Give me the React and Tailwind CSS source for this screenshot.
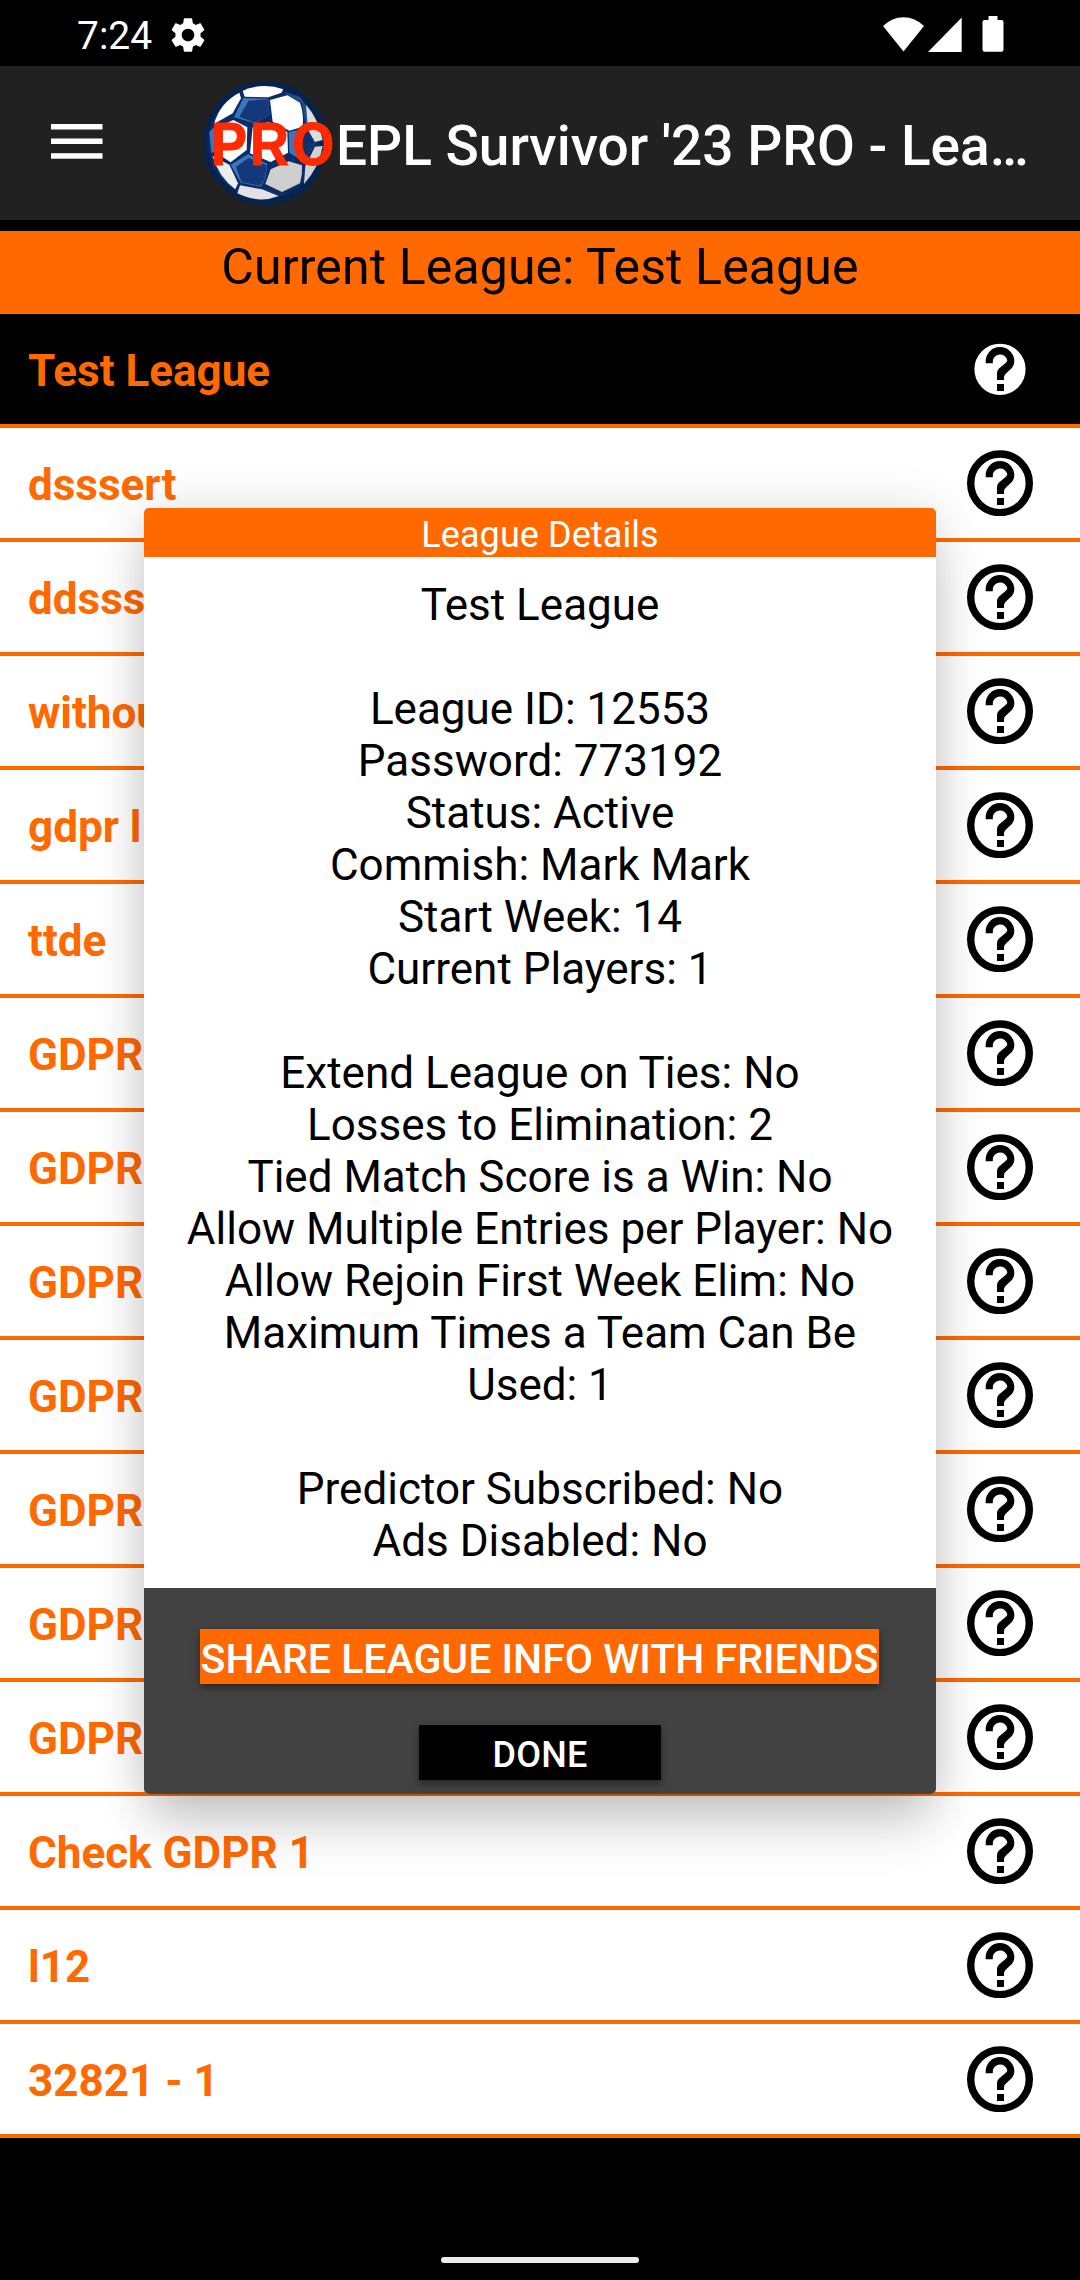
import React from 'react';

const leagues = [
    'Test League',
    'dsssert',
    'ddsssert',
    'without',
    'gdpr l',
    'ttde',
    'GDPR 1',
    'GDPR 2',
    'GDPR 3',
    'GDPR 4',
    'GDPR 5',
    'GDPR 6',
    'GDPR 7',
    'Check GDPR 1',
    'l12',
    '32821 - 1'
];

const details = [
    ['Test League'],
    [
        'League ID: 12553',
        'Password: 773192',
        'Status: Active',
        'Commish: Mark Mark',
        'Start Week: 14',
        'Current Players: 1'
    ],
    [
        'Extend League on Ties: No',
        'Losses to Elimination: 2',
        'Tied Match Score is a Win: No',
        'Allow Multiple Entries per Player: No',
        'Allow Rejoin First Week Elim: No',
        'Maximum Times a Team Can Be Used: 1'
    ],
    ['Predictor Subscribed: No', 'Ads Disabled: No']
];

function App() {
    return (
        <div className="relative w-[1080px] h-[2280px] overflow-hidden bg-black font-['Roboto',sans-serif] flex flex-col">
            <StatusBar />
            <Header />

            <div className="mt-[11px] h-[83px] shrink-0 bg-[#ff6900] text-center text-black text-[50px] tracking-[0.12px] leading-[58px] pt-[7px]">
                Current League: Test League
            </div>

            <div className="flex flex-col">
                {leagues.map((nome, i) => (
                    <LeagueRow key={nome} name={nome} selected={i === 0} />
                ))}
            </div>

            <div className="mt-auto mb-[17px] mx-auto w-[198px] h-[6px] rounded-full bg-[#ececec]" />

            <LeagueDetails />
        </div>
    );
}

function StatusBar() {
    return (
        <div className="h-[66px] shrink-0 flex items-center text-white">
            <span className="ml-[77px] mt-[6px] w-[90px] text-[39px] leading-[46px]">7:24</span>
            <svg className="w-[42px] h-[42px] mt-[4px]" viewBox="0 0 24 24" fill="currentColor">
                <path d="M19.14 12.94c.04-.3.06-.61.06-.94 0-.32-.02-.64-.07-.94l2.03-1.58c.18-.14.23-.41.12-.61l-1.92-3.32c-.12-.22-.37-.29-.59-.22l-2.39.96c-.5-.38-1.03-.7-1.62-.94l-.36-2.54c-.04-.24-.24-.41-.48-.41h-3.84c-.24 0-.43.17-.47.41l-.36 2.54c-.59.24-1.13.57-1.62.94l-2.39-.96c-.22-.08-.47 0-.59.22L2.74 8.87c-.12.21-.08.47.12.61l2.03 1.58c-.05.3-.09.63-.09.94s.02.64.07.94l-2.03 1.58c-.18.14-.23.41-.12.61l1.92 3.32c.12.22.37.29.59.22l2.39-.96c.5.38 1.03.7 1.62.94l.36 2.54c.05.24.24.41.48.41h3.84c.24 0 .44-.17.47-.41l.36-2.54c.59-.24 1.13-.56 1.62-.94l2.39.96c.22.08.47 0 .59-.22l1.92-3.32c.12-.22.07-.47-.12-.61l-2.01-1.58zM12 15.6c-1.98 0-3.6-1.62-3.6-3.6s1.62-3.6 3.6-3.6 3.6 1.62 3.6 3.6-1.62 3.6-3.6 3.6z" />
            </svg>
            <svg className="ml-auto mr-[77px] w-[120px] h-[36px] mt-[2px] overflow-visible" viewBox="0 0 120 36" fill="currentColor">
                <path d="M0 10Q9 1.200 20.500 1.200T41 10L20.500 35.500Z" />
                <path d="M45 36L78.700 1.500V36Z" />
                <path d="M105.500 0H114.500V4H118.500Q120.500 4 120.500 6V33.500Q120.500 35.800 118.500 35.800H101.500Q99.500 35.800 99.500 33.500V6Q99.500 4 101.500 4H105.500Z" />
            </svg>
        </div>
    );
}

function Header() {
    return (
        <div className="h-[154px] shrink-0 bg-[#212121] flex items-center text-white">
            <svg className="ml-[51px] mb-[3px] w-[52px] h-[35px]" viewBox="0 0 52 35" fill="currentColor">
                <rect width="51.500" height="5.500" />
                <rect y="14.500" width="51.500" height="5.500" />
                <rect y="29.200" width="51.500" height="5.500" />
            </svg>
            <BallLogo />
            <h1 className="ml-[2px] mt-[6px] text-[55px] leading-[64px] font-medium whitespace-nowrap">
                EPL Survivor '23 PRO - Lea…
            </h1>
        </div>
    );
}

function BallLogo() {
    return (
        <svg className="ml-[97px] w-[134px] h-[146px] overflow-visible" viewBox="0 0 402 438">
            <circle cx="196" cy="219" r="186" fill="#06234f" />
            <circle cx="192" cy="219" r="168" fill="#0d2c66" />
            <path d="M128 62Q190 36 250 58L244 68L205 82L134 80Z" fill="#fff" />
            <path d="M118 68L123 85L98 130L42 162Q60 98 118 68Z" fill="#fff" />
            <path d="M130 84L205 86L208 134L165 160L102 142Z" fill="#3c74bd" />
            <path d="M146 92L205 88L207 134L165 159L118 140Z" fill="#14397a" />
            <path d="M252 66L300 80Q335 120 318 170L306 100L262 74Z" fill="#1f4c8e" />
            <path d="M210 90L262 76L300 98Q312 130 308 170L268 182L218 155Z" fill="#fff" />
            <path d="M28 185L42 172L44 245L34 250Z" fill="#3c74bd" />
            <path d="M46 175L100 150L142 172L140 240L92 277L44 245Z" fill="#fff" />
            <path d="M158 172L205 156L262 186L264 248L212 276L150 250Z" fill="#fff" />
            <path d="M266 186L312 176L345 218L312 276L268 248Z" fill="#3c74bd" />
            <path d="M296 184L316 180L344 218L316 268L296 262Z" fill="#112f68" />
            <path d="M318 104Q355 145 368 210L345 216L324 180Z" fill="#dcdcdc" />
            <path d="M345 230L368 228Q358 292 312 342L316 288Z" fill="#d2d2d2" />
            <path d="M92 284L145 252L202 282L196 326L182 350L122 338Z" fill="#3c74bd" />
            <path d="M108 290L146 264L200 286L194 328L180 347L124 336Z" fill="#14397a" />
            <path d="M212 298L266 274L306 286Q308 312 300 340L246 366L196 342Z" fill="#cfcfcf" />
            <path d="M38 258L88 284L114 340L106 358Q56 322 38 258Z" fill="#ececec" />
            <path d="M120 346L186 358L236 378Q176 402 112 370Z" fill="#e2e2e2" />
            <text
                x="37 169 311"
                y="286"
                transform="scale(0.89 1)"
                fill="#ff2a00"
                stroke="#ff2a00"
                strokeWidth="3"
                fontFamily="Liberation Sans, sans-serif"
                fontWeight="700"
                fontSize="182"
            >
                PRO
            </text>
        </svg>
    );
}

function LeagueRow({ name, selected }) {
    return (
        <div
            className={`h-[114px] shrink-0 border-b-4 border-[#ff6900] flex items-center justify-between pl-[28px] pr-[47px] ${
                selected ? 'bg-black' : 'bg-white'
            }`}
        >
            <span className="pt-[3px] text-[44px] leading-[52px] font-bold text-[#ff6900]">{name}</span>
            <HelpIcon />
        </div>
    );
}

function HelpIcon() {
    return (
        <svg className="w-[66px] h-[66px]" viewBox="0 0 66 66">
            <circle cx="33" cy="33.300" r="29.300" fill="#fff" stroke="#000" strokeWidth="7.400" />
            <path d="M18.700 27.300V25.300A14.300 14.300 0 0 1 47.300 25.300C47.300 29 45.800 31.200 43.500 33.300L39.500 36.900Q37 39 37 41V44H30V37.500Q30 34.500 32 32.500L38 27.500Q40.300 25.500 40.300 24.200A7.300 6.800 0 0 0 25.800 25.300V27.300Z" />
            <rect x="30" y="48" width="7" height="7" />
        </svg>
    );
}

function LeagueDetails() {
    return (
        <div className="absolute left-[144px] top-[508px] w-[792px] h-[1286px] rounded-[5px] shadow-[0_40px_50px_-8px_rgba(0,0,0,0.16),0_4px_50px_rgba(0,0,0,0.16)]">
            <div className="h-full flex flex-col rounded-[5px] overflow-hidden bg-white text-center">
                <div className="h-[49px] shrink-0 bg-[#ff6900] text-white text-[36px] tracking-[0.08px] leading-[42px] pt-[6px]">
                    League Details
                </div>

                <div className="h-[1031px] shrink-0 px-[28px] pt-[22px] flex flex-col gap-[52px] text-[44px] leading-[52px] text-black">
                    {details.map((grupo, i) => (
                        <div key={i}>
                            {grupo.map(linha => (
                                <p key={linha}>{linha}</p>
                            ))}
                        </div>
                    ))}
                </div>

                <div className="h-[206px] shrink-0 bg-[#424242] flex flex-col items-center text-white font-medium">
                    <button className="mt-[41px] mr-[1px] w-[679px] h-[55px] bg-[#ff6900] text-[41px] leading-[55px] pt-[3px] whitespace-nowrap shadow-[0_4px_8px_rgba(0,0,0,0.4)]">
                        SHARE LEAGUE INFO WITH FRIENDS
                    </button>
                    <button className="mt-[41px] w-[242px] h-[55px] bg-black text-[36px] tracking-[0.2px] leading-[55px] pt-[3px] shadow-[0_4px_8px_rgba(0,0,0,0.4)]">
                        DONE
                    </button>
                </div>
            </div>
        </div>
    );
}

export default App;
